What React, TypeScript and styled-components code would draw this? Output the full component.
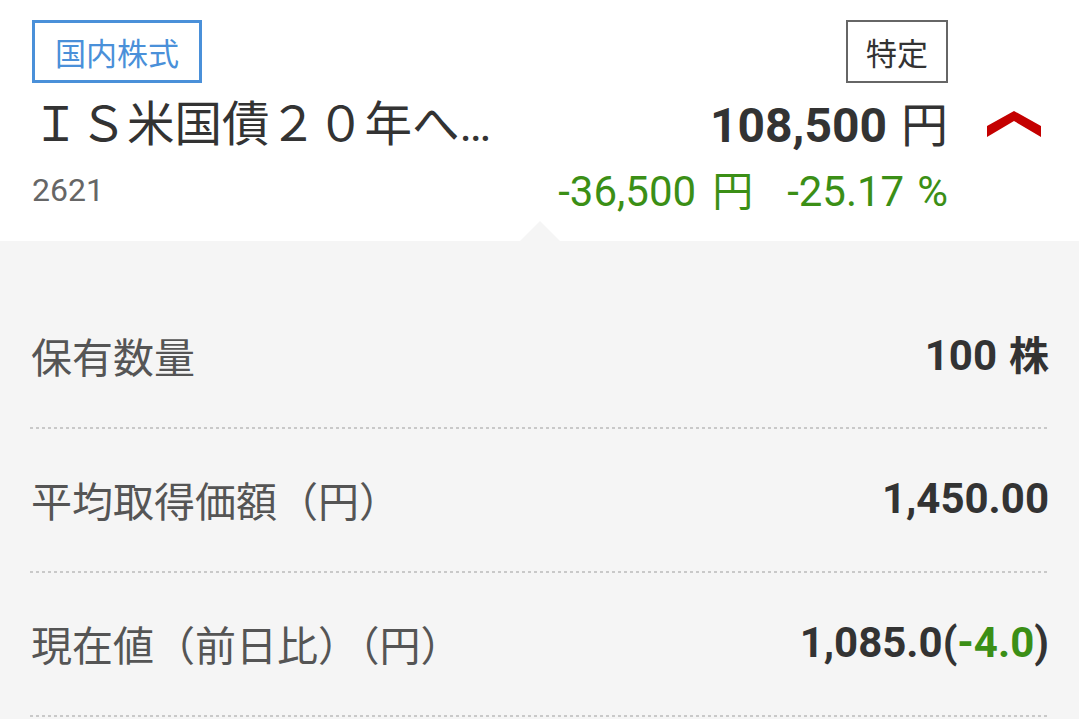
import React from 'react';
import styled, { createGlobalStyle } from 'styled-components';

const GlobalStyle = createGlobalStyle`
  html, body {
    margin: 0;
    padding: 0;
    background: #f5f5f5;
  }
  body {
    font-family: Roboto, "Noto Sans CJK JP", sans-serif;
    color: #333;
  }
`;

const Page = styled.div`
  width: 1079px;
  min-height: 719px;
  background: #f5f5f5;
`;

const Header = styled.div`
  display: grid;
  grid-template-columns: 1fr auto 131px;
  grid-template-rows: 63px 82px 50px;
  padding: 20px 0 26px 32px;
  background: #fff;
`;

const Tag = styled.div<{ $tone: 'blue' | 'gray' }>`
  box-sizing: border-box;
  height: 63px;
  display: flex;
  align-items: center;
  padding: 0 ${({ $tone }) => ($tone === 'blue' ? '20px' : '18px')};
  border: ${({ $tone }) => ($tone === 'blue' ? '3px solid #4a90d9' : '2.5px solid #666')};
  color: ${({ $tone }) => ($tone === 'blue' ? '#4a90d9' : '#333')};
  font-family: "Noto Sans CJK JP", sans-serif;
  font-size: 31px;
  line-height: 1;
  justify-self: ${({ $tone }) => ($tone === 'blue' ? 'start' : 'end')};
`;

const Title = styled.div`
  align-self: center;
  font-family: Roboto, "Noto Sans CJK JP", sans-serif;
  font-size: 47.5px;
  line-height: 1;
  color: #333;
  white-space: nowrap;
  margin-top: 4px;
`;

const Price = styled.div`
  justify-self: end;
  align-self: center;
  display: flex;
  align-items: baseline;
  gap: 14px;
  color: #333;
  line-height: 1;
`;

const PriceNum = styled.span`
  font-family: Roboto, sans-serif;
  font-weight: 700;
  font-size: 48px;
`;

const Yen = styled.span<{ $size: number }>`
  font-family: "Noto Sans CJK JP", sans-serif;
  font-size: ${({ $size }) => $size}px;
  font-weight: 400;
`;

const Chevron = styled.div`
  display: flex;
  align-items: center;
  justify-content: center;
`;

const Code = styled.div`
  align-self: center;
  font-family: Roboto, sans-serif;
  font-size: 32px;
  color: #666;
  line-height: 1;
`;

const Change = styled.div`
  justify-self: end;
  align-self: center;
  display: flex;
  align-items: baseline;
  gap: 34px;
  color: #3b8f16;
  font-family: Roboto, sans-serif;
  font-size: 42px;
  line-height: 1;
`;

const ChangeItem = styled.span<{ $gap: number }>`
  display: inline-flex;
  align-items: baseline;
  gap: ${({ $gap }) => $gap}px;
`;

const Panel = styled.div`
  position: relative;
  padding: 44px 30px 0;
  background: #f5f5f5;

  &::before {
    content: '';
    position: absolute;
    top: -20px;
    left: 50%;
    margin-left: -20px;
    border-left: 20px solid transparent;
    border-right: 20px solid transparent;
    border-bottom: 20px solid #f5f5f5;
  }
`;

const Row = styled.div`
  display: flex;
  align-items: center;
  justify-content: space-between;
  height: 144px;
  box-sizing: border-box;
  padding-bottom: 4px;
  background-image: linear-gradient(to right, #c9c9c9 45%, transparent 45%);
  background-size: 6px 2px;
  background-repeat: repeat-x;
  background-position: left bottom;
`;

const Label = styled.div`
  font-family: "Noto Sans CJK JP", sans-serif;
  font-size: 41px;
  color: #555;
  line-height: 1;
  padding-left: 1px;
`;

const Value = styled.div`
  display: flex;
  align-items: baseline;
  font-family: Roboto, "Noto Sans CJK JP", sans-serif;
  font-weight: 700;
  font-size: 42px;
  color: #333;
  line-height: 1;
`;

const Unit = styled.span`
  font-family: "Noto Sans CJK JP", sans-serif;
  font-weight: 700;
  font-size: 40px;
  margin-left: 12px;
`;

const Minus = styled.span`
  color: #3b8f16;
`;

const rows = [
  { label: '保有数量', value: <>100<Unit>株</Unit></> },
  { label: '平均取得価額（円）', value: <>1,450.00</> },
  { label: '現在値（前日比）（円）', value: <>1,085.0(<Minus>-4.0</Minus>)</> },
];

const App: React.FC = () => {
  return (
    <Page>
      <GlobalStyle />
      <Header>
        <Tag $tone="blue">国内株式</Tag>
        <Tag $tone="gray">特定</Tag>
        <div />

        <Title>ＩＳ米国債２０年へ…</Title>
        <Price>
          <PriceNum>108,500</PriceNum>
          <Yen $size={47}>円</Yen>
        </Price>
        <Chevron>
          <svg width="54" height="28" viewBox="0 0 54 28">
            <polygon points="0,16 27,1 54,16 54,27 27,11 0,27" fill="#c40000" />
          </svg>
        </Chevron>

        <Code>2621</Code>
        <Change>
          <ChangeItem $gap={16}>
            -36,500<Yen $size={41}>円</Yen>
          </ChangeItem>
          <ChangeItem $gap={13}>
            -25.17<span>%</span>
          </ChangeItem>
        </Change>
        <div />
      </Header>

      <Panel>
        {rows.map((r) => (
          <Row key={r.label}>
            <Label>{r.label}</Label>
            <Value>{r.value}</Value>
          </Row>
        ))}
      </Panel>
    </Page>
  );
};

export default App;
